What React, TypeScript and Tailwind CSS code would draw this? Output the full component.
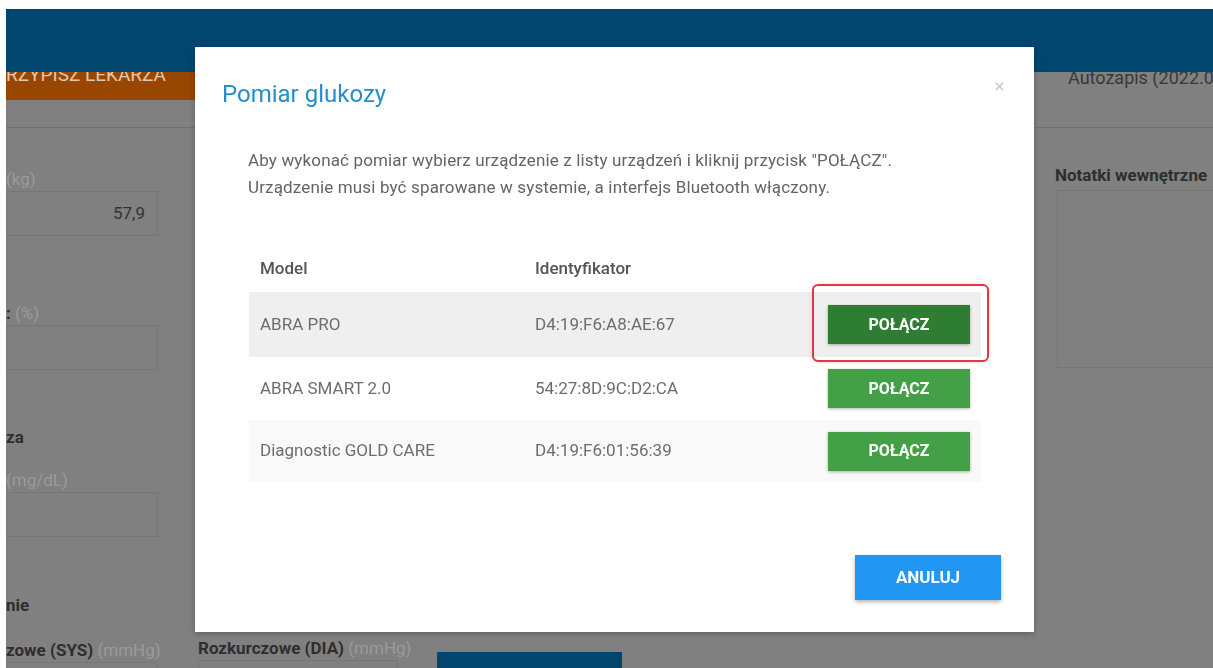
import { X } from "lucide-react";

type Device = { model: string; id: string };

const DEVICES: Device[] = [
  { model: "ABRA PRO", id: "D4:19:F6:A8:AE:67" },
  { model: "ABRA SMART 2.0", id: "54:27:8D:9C:D2:CA" },
  { model: "Diagnostic GOLD CARE", id: "D4:19:F6:01:56:39" },
];

const rowBg = ["bg-[#efefef]", "bg-white", "bg-[#f9f9f9]"];
const rowH = ["h-[65px]", "h-[63px]", "h-[62px]"];

function Field({ label, unit, value }: { label?: string; unit?: string; value?: string }) {
  return (
    <div>
      <div className="h-5 text-[17px] leading-5 whitespace-nowrap">
        {label && <span className="font-bold text-[#2e2e2e]">{label} </span>}
        {unit && <span className="text-[#9a9a9a]">{unit}</span>}
      </div>
      <div className="mt-[2px] h-[45px] border border-[#767676] flex items-center justify-end pr-3 text-[17px] text-[#333]">
        {value}
      </div>
    </div>
  );
}

function GlucoseModal() {
  return (
    <div className="fixed inset-0 z-20 pl-[195px] pt-[47px]">
      <div className="w-[839px] h-[585px] bg-white shadow-[0_2px_6px_rgba(0,0,0,0.25)] flex flex-col">
        <div className="flex items-start justify-between pl-[27px] pr-[28px] pt-[31px]">
          <h2 className="text-[24px] leading-8 text-[#268dcd]">Pomiar glukozy</h2>
          <button className="mt-[2px] text-[#c4c4c4]">
            <X className="w-[13px] h-[13px]" strokeWidth={2.5} />
          </button>
        </div>

        <div className="pl-[53px] pr-[30px] mt-[37px] text-[17px] leading-[27px] tracking-[0.15px] text-[#646464]">
          <p>Aby wykonać pomiar wybierz urządzenie z listy urządzeń i kliknij przycisk "POŁĄCZ".</p>
          <p>Urządzenie musi być sparowane w systemie, a interfejs Bluetooth włączony.</p>
        </div>

        <div className="relative ml-[54px] w-[732px] mt-[44px] text-[17px]">
          <div className="flex h-[47px] items-center font-medium text-[#555]">
            <div className="w-[286px] pl-[11px]">Model</div>
            <div>Identyfikator</div>
          </div>
          {DEVICES.map((d, i) => (
            <div key={d.id} className={`flex items-center text-[#6d6d6d] ${rowBg[i]} ${rowH[i]}`}>
              <div className="w-[286px] pl-[11px]">{d.model}</div>
              <div className="flex-1">{d.id}</div>
              <button
                className={`mr-[11px] w-[142px] h-[39px] text-white text-[16px] font-bold shadow-[0_1px_3px_rgba(0,0,0,0.3)] ${
                  i === 0 ? "bg-[#2e7d32]" : "bg-[#43a047]"
                }`}
              >
                POŁĄCZ
              </button>
            </div>
          ))}
          {/* highlight around the first connect button */}
          <div className="absolute left-[563px] top-[39px] w-[177px] h-[78px] rounded-[6px] border-2 border-[#e0383e] shadow-[0_0_4px_rgba(0,0,0,0.15)]" />
        </div>

        <div className="mt-auto mb-[32px] mr-[33px] flex justify-end">
          <button className="w-[146px] h-[45px] bg-[#2196f3] text-white text-[17px] font-bold shadow-[0_2px_4px_rgba(0,0,0,0.3)]">
            ANULUJ
          </button>
        </div>
      </div>
    </div>
  );
}

export default function App() {
  return (
    <div className="h-[668px] overflow-hidden bg-white pt-[9px] pl-[6px] font-['Roboto',sans-serif]">
      <div className="relative h-full bg-[#808080] flex flex-col overflow-hidden">
        <header className="relative z-10 h-[63px] shrink-0 bg-[#01466f]" />

        <div className="-mt-[12px] shrink-0 flex h-[40px] items-center">
          <div className="w-[420px] h-full bg-[#984600] flex items-center overflow-hidden pb-[9px] text-[19px] text-[#e2c7ad] whitespace-nowrap">
            <span className="-ml-[12px]">PRZYPISZ LEKARZA</span>
          </div>
          <div className="ml-auto w-[145px] pb-[6px] text-[18px] text-[#383838] whitespace-nowrap overflow-hidden">
            Autozapis (2022.03.14 10:21)
          </div>
        </div>

        <div className="mt-[27px] shrink-0 h-px bg-[#727272]" />

        <div className="flex flex-1 min-h-0">
          <div className="w-[620px]">
            <div className="w-[152px] mt-[41px]">
              <Field unit="(kg)" value="57,9" />
              <div className="mt-[67px]">
                <Field label=":" unit="(%)" />
              </div>
              <div className="mt-[57px] h-5 text-[17px] leading-5 font-bold text-[#2e2e2e]">za</div>
              <div className="mt-[23px]">
                <Field unit="(mg/dL)" />
              </div>
              <div className="mt-[58px] h-5 text-[17px] leading-5 font-bold text-[#2e2e2e]">nie</div>
            </div>
            <div className="mt-[25px] flex items-start">
              <div className="w-[152px]">
                <Field label="zowe (SYS)" unit="(mmHg)" />
              </div>
              <div className="ml-[40px] w-[200px] -mt-[2px]">
                <Field label="Rozkurczowe (DIA)" unit="(mmHg)" />
              </div>
              <div className="ml-[39px] mt-[12px] w-[185px] h-[40px] bg-[#02466f]" />
            </div>
          </div>

          <div className="ml-auto w-[158px] mt-[37px]">
            <div className="text-[17px] leading-5 font-bold text-[#2e2e2e] whitespace-nowrap">Notatki wewnętrzne</div>
            <div className="mt-[5px] ml-[2px] h-[178px] border border-[#767676] border-r-0" />
          </div>
        </div>
      </div>

      <GlucoseModal />
    </div>
  );
}
